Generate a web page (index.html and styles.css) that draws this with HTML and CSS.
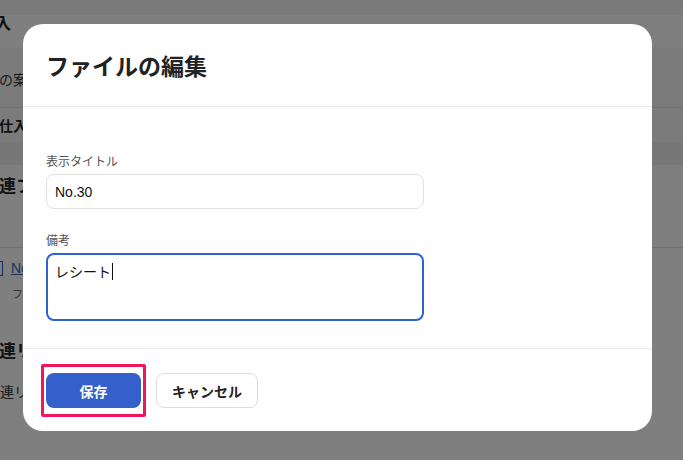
FILE: index.html
```html
<!DOCTYPE html>
<html lang="ja">
<head>
<meta charset="utf-8">
<title>ファイルの編集</title>
<link rel="stylesheet" href="styles.css">
</head>
<body>
<div class="page">
  <div class="band-top"></div>
  <div class="row row-title"><span class="bg-title">購入</span></div>
  <div class="row row-info"><span class="bg-text indent-info">ご利用の案内</span></div>
  <div class="row row-supplier"><span class="bg-strong">仕入先</span></div>
  <div class="band-gap"></div>
  <section class="section">
    <h2 class="bg-heading">関連ファイル</h2>
    <div class="file-row">
      <span class="file-icon"></span>
      <a class="file-link">No.30</a>
    </div>
    <div class="file-sub">ファイル</div>
    <h2 class="bg-heading heading-links">関連リンク</h2>
    <p class="bg-text indent-links">関連リンクはありません</p>
  </section>
</div>

<div class="overlay">
  <div class="modal">
    <header class="modal-header">
      <h1 class="modal-title">ファイルの編集</h1>
    </header>
    <div class="modal-body">
      <label class="field-label">表示タイトル</label>
      <div class="input">No.30</div>
      <label class="field-label label-gap">備考</label>
      <div class="textarea">レシート<span class="caret"></span></div>
    </div>
    <footer class="modal-footer">
      <span class="highlight"><button class="btn btn-primary">保存</button></span>
      <button class="btn btn-secondary">キャンセル</button>
    </footer>
  </div>
</div>
</body>
</html>
```

FILE: styles.css
```css
* { box-sizing: border-box; }

html, body {
  margin: 0;
  padding: 0;
}

body {
  width: 683px;
  height: 460px;
  overflow: hidden;
  position: relative;
  font-family: "Noto Sans CJK JP", "Noto Sans", sans-serif;
  color: #222;
  background: #fff;
}

/* ---- background page ---- */
.page {
  width: 683px;
}

.band-top {
  height: 15px;
  background: #f4f4f4;
}

.row {
  white-space: nowrap;
  overflow: hidden;
}

.row-title {
  height: 33px;
  background: #fff;
}

.bg-title {
  display: block;
  font-size: 16px;
  line-height: 14px;
  font-weight: 700;
  margin-left: -21px;
}

.row-info {
  height: 60px;
  background: #f7f7f7;
  border-bottom: 1px solid #dedede;
  padding-top: 21px;
}

.bg-text {
  display: block;
  margin: 0;
  font-size: 14px;
  line-height: 20px;
  color: #333;
  white-space: nowrap;
}

.indent-info { margin-left: -43px; }

.row-supplier {
  height: 34px;
  background: #f7f7f7;
  padding-top: 7px;
}

.bg-strong {
  display: block;
  font-size: 14px;
  line-height: 20px;
  font-weight: 700;
  margin-left: -1px;
}

.band-gap {
  height: 23px;
  background: #efefef;
}

.section {
  background: #fff;
  height: 300px;
}

.bg-heading {
  margin: 0;
  padding-top: 10px;
  height: 83px;
  border-bottom: 1px solid #dedede;
  font-size: 17px;
  line-height: 20px;
  font-weight: 700;
  margin-left: -18px;
  white-space: nowrap;
}

.file-row {
  display: flex;
  align-items: center;
  gap: 8px;
  height: 20px;
  margin-top: 10px;
}

.file-icon {
  display: block;
  width: 14px;
  height: 15px;
  border: 1px solid #2f5fc4;
  margin-left: -11px;
}

.file-link {
  font-size: 14px;
  color: #2f5fc4;
  text-decoration: underline;
  font-family: "Liberation Sans", sans-serif;
}

.file-sub {
  margin-top: 6px;
  margin-left: 12px;
  font-size: 11px;
  line-height: 18px;
  color: #666;
}

.heading-links {
  margin-top: 38px;
  border-bottom: none;
  height: auto;
  padding-top: 0;
}

.indent-links {
  margin-top: 21px;
  margin-left: -14px;
}

/* ---- overlay & modal ---- */
.overlay {
  position: absolute;
  inset: 0;
  background: rgba(0, 0, 0, 0.5);
  padding: 24px 0 0 23px;
}

.modal {
  width: 629px;
  background: #fff;
  border-radius: 20px;
  overflow: hidden;
}

.modal-header {
  height: 83px;
  padding: 0 23px;
  display: flex;
  align-items: center;
  border-bottom: 1px solid #e9e9e9;
}

.modal-title {
  margin: 0;
  font-size: 23px;
  line-height: 32px;
  font-weight: 700;
  color: #222;
}

.modal-body {
  padding: 45px 23px 27px;
  display: flex;
  flex-direction: column;
  align-items: flex-start;
}

.field-label {
  font-size: 12px;
  line-height: 18px;
  color: #555;
  margin-bottom: 4px;
}

.label-gap { margin-top: 22px; }

.input {
  width: 378px;
  height: 35px;
  border: 1px solid #e2e2e2;
  border-radius: 8px;
  padding: 0 8px;
  display: flex;
  align-items: center;
  font-family: "Liberation Sans", "Noto Sans CJK JP", sans-serif;
  font-size: 14px;
  color: #111;
}

.textarea {
  width: 378px;
  height: 68px;
  border: 2px solid #2f63d5;
  border-radius: 8px;
  padding: 6px 7px;
  font-size: 14px;
  line-height: 20px;
  color: #111;
  display: flex;
  align-items: flex-start;
}

.caret {
  display: inline-block;
  width: 1px;
  height: 17px;
  margin-top: 2px;
  margin-left: 1px;
  background: #111;
}

.modal-footer {
  height: 83px;
  border-top: 1px solid #e9e9e9;
  padding: 24px 23px 0;
  display: flex;
  align-items: flex-start;
  gap: 15px;
}

.highlight {
  position: relative;
  display: block;
}

.highlight::after {
  content: "";
  position: absolute;
  inset: -9px -5px;
  border: 3px solid #f2155a;
  border-radius: 2px;
}

.btn {
  height: 35px;
  border-radius: 8px;
  font-family: "Noto Sans CJK JP", sans-serif;
  font-size: 14px;
  font-weight: 700;
  display: block;
  padding: 0;
  cursor: pointer;
}

.btn-primary {
  width: 95px;
  background: #3560cc;
  color: #fff;
  border: none;
}

.btn-secondary {
  width: 102px;
  background: #fff;
  color: #222;
  border: 1px solid #dcdcdc;
}
```
